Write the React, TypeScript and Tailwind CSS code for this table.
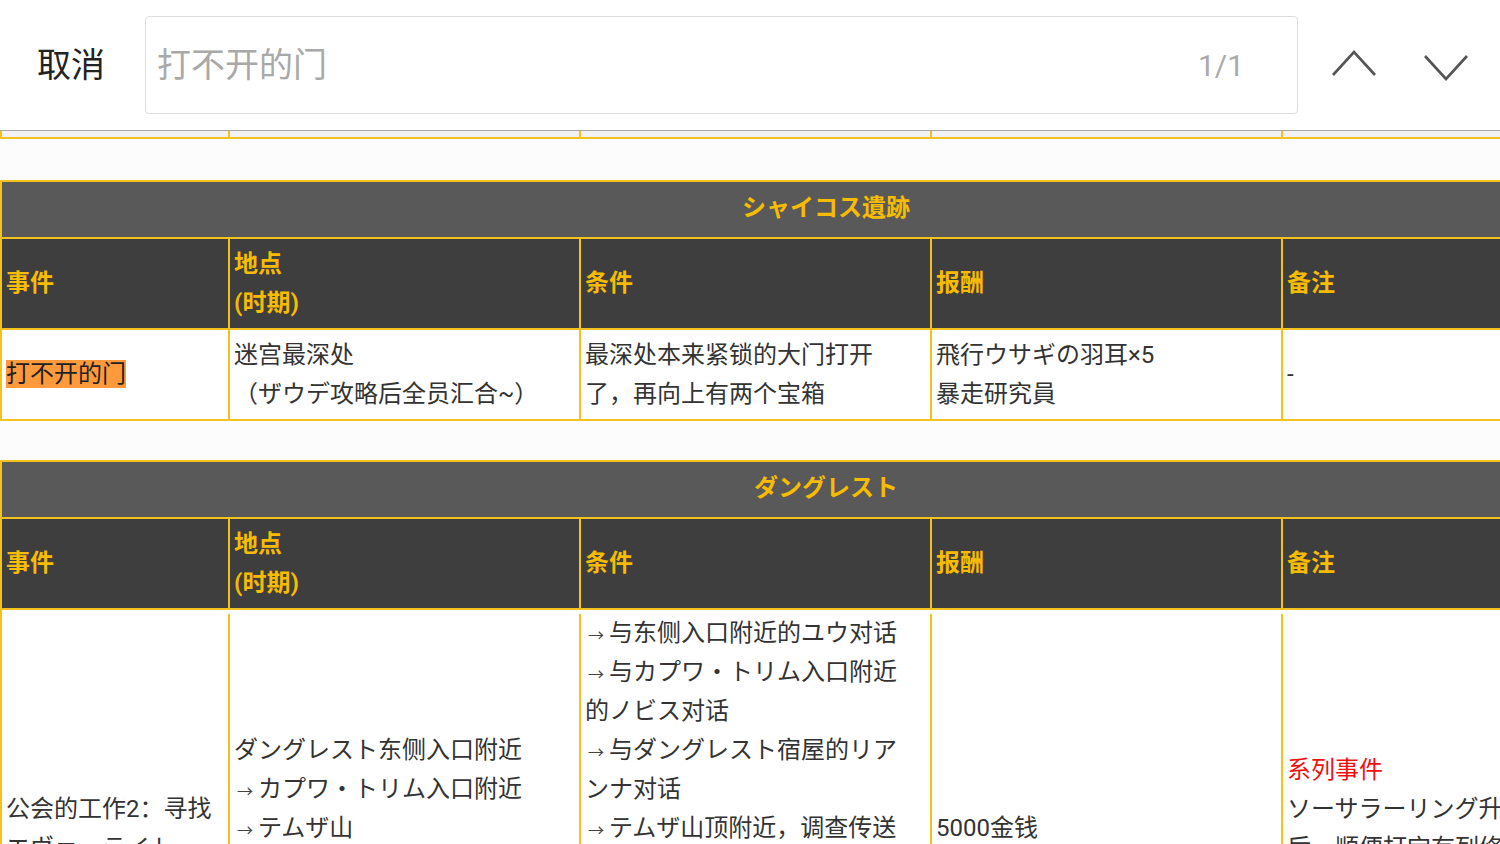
import React from "react";

const COLS = "grid grid-cols-[228px_351px_351px_351px_1fr]";
const FONT = { fontFamily: "Roboto, 'Noto Sans CJK SC', 'Noto Sans', sans-serif" };

function Head() {
  const cell = "border-r-2 border-[#f4c21c] flex flex-col justify-center px-[4px] text-[24px] leading-[39px] font-bold text-[#f7bb00] h-[89px]";
  return (
    <div className={`${COLS} bg-[#3e3e3e] border-b-2 border-[#f4c21c]`}>
      <div className={cell}>事件</div>
      <div className={cell}>
        <div>地点</div>
        <div>(时期)</div>
      </div>
      <div className={cell}>条件</div>
      <div className={cell}>报酬</div>
      <div className={cell + " border-r-0"}>备注</div>
    </div>
  );
}

function Title({ text }: { text: string }) {
  return (
    <div className="h-[57px] bg-[#595959] border-b-2 border-[#f4c21c] flex items-center justify-center text-[24px] font-bold text-[#f7bb00] pb-[3px]">
      {text}
    </div>
  );
}

const dcell = "border-r-2 border-[#f4c21c] flex flex-col justify-center px-[4px] text-[24px] leading-[39px] text-[#333] bg-white whitespace-nowrap overflow-hidden";

function Line({ text }: { text: string }) {
  if (text.startsWith("→")) {
    return (
      <div className="h-[39px]">
        <span className="inline-block w-[24px] pl-[3px] text-[16px] leading-[0] text-[#444]">→</span>
        {text.slice(1)}
      </div>
    );
  }
  return <div className="h-[39px]">{text}</div>;
}

function Lines({ lines }: { lines: string[] }) {
  return (
    <>
      {lines.map((l, i) => (
        <Line key={i} text={l} />
      ))}
    </>
  );
}

export default function App() {
  return (
    <div className="w-[1500px] h-[844px] overflow-hidden bg-[#fcfcfc]" style={FONT}>
      {/* search bar */}
      <div className="h-[131px] bg-white border-b border-[#a8a8a8] flex items-center">
        <div className="w-[145px] pl-[37px] text-[34px] text-[#222] leading-none">取消</div>
        <div className="w-[1153px] h-[98px] border border-[#dcdcdc] rounded-[4px] flex items-center justify-between pl-[11px] pr-[53px]">
          <span className="text-[34px] text-[#a9a9a9]">打不开的门</span>
          <span className="text-[30px] text-[#a9a9a9]">1/1</span>
        </div>
        <div className="flex items-center gap-[48px] pl-[34px]">
          <svg width="44" height="28" viewBox="0 0 44 28" className="mt-[-4px]">
            <polyline points="1,26 22,3 43,26" fill="none" stroke="#555" strokeWidth="2.6" />
          </svg>
          <svg width="44" height="28" viewBox="0 0 44 28" className="mt-[4px]">
            <polyline points="1,3 22,26 43,3" fill="none" stroke="#555" strokeWidth="2.6" />
          </svg>
        </div>
      </div>

      {/* remnant row of previous table */}
      <div className={`${COLS} w-[1652px] h-[8px] bg-[#f2f2f2] border-b-2 border-[#f4c21c] border-l-2`}>
        <div className="border-r-2 border-[#f4c21c]" />
        <div className="border-r-2 border-[#f4c21c]" />
        <div className="border-r-2 border-[#f4c21c]" />
        <div className="border-r-2 border-[#f4c21c]" />
        <div />
      </div>

      <div className="h-[41px]" />

      {/* Table 1 */}
      <div className="w-[1652px] border-2 border-[#f4c21c]">
        <Title text="シャイコス遺跡" />
        <Head />
        <div className={`${COLS} h-[89px]`}>
          <div className={dcell}>
            <div>
              <span className="bg-[#ff9a3c] text-[#222]">打不开的门</span>
            </div>
          </div>
          <div className={dcell}>
            <Lines lines={["迷宫最深处", "（ザウデ攻略后全员汇合~）"]} />
          </div>
          <div className={dcell}>
            <Lines lines={["最深处本来紧锁的大门打开", "了，再向上有两个宝箱"]} />
          </div>
          <div className={dcell}>
            <Lines lines={["飛行ウサギの羽耳×5", "暴走研究員"]} />
          </div>
          <div className={dcell + " border-r-0"}>-</div>
        </div>
      </div>

      <div className="h-[39px]" />

      {/* Table 2 */}
      <div className="w-[1652px] border-2 border-[#f4c21c]">
        <Title text="ダングレスト" />
        <Head />
        <div className={`${COLS} py-[4px] bg-white`}>
          <div className={dcell}>
            <Lines lines={["公会的工作2：寻找", "エヴァーライト"]} />
          </div>
          <div className={dcell}>
            <Lines
              lines={[
                "ダングレスト东侧入口附近",
                "→カプワ・トリム入口附近",
                "→テムザ山",
                "→ダングレスト",
                "（ED前）",
              ]}
            />
          </div>
          <div className={dcell}>
            <Lines
              lines={[
                "→与东侧入口附近的ユウ对话",
                "→与カプワ・トリム入口附近",
                "的ノビス对话",
                "→与ダングレスト宿屋的リア",
                "ンナ对话",
                "→テムザ山顶附近，调查传送",
                "装置附近的光点",
                "→回到ダングレスト，与公会",
                "的人对话",
                "→与ダングレスト宿屋的ユウ",
                "对话",
              ]}
            />
          </div>
          <div className={dcell}>5000金钱</div>
          <div className={dcell + " border-r-0"}>
            <div className="text-[#ee1111]">系列事件</div>
            <div>ソーサラーリング升级</div>
            <div>后，顺便打宝有列修</div>
            <div>之事件</div>
          </div>
        </div>
      </div>
    </div>
  );
}
